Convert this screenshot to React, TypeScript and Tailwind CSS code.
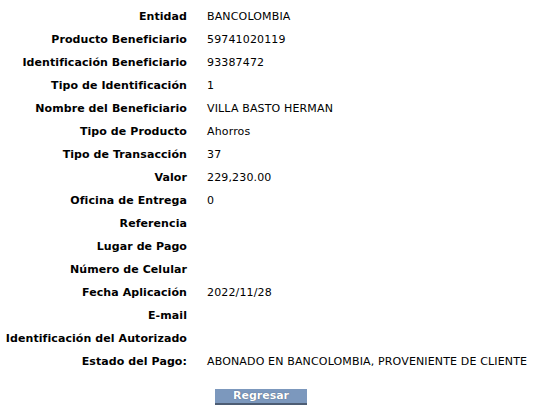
import React from 'react'

const rows: [string, string][] = [
  ['Entidad', 'BANCOLOMBIA'],
  ['Producto Beneficiario', '59741020119'],
  ['Identificación Beneficiario', '93387472'],
  ['Tipo de Identificación', '1'],
  ['Nombre del Beneficiario', 'VILLA BASTO HERMAN'],
  ['Tipo de Producto', 'Ahorros'],
  ['Tipo de Transacción', '37'],
  ['Valor', '229,230.00'],
  ['Oficina de Entrega', '0'],
  ['Referencia', ''],
  ['Lugar de Pago', ''],
  ['Número de Celular', ''],
  ['Fecha Aplicación', '2022/11/28'],
  ['E-mail', ''],
  ['Identificación del Autorizado', ''],
  ['Estado del Pago:', 'ABONADO EN BANCOLOMBIA, PROVENIENTE DE CLIENTE'],
]

const App: React.FC = () => {
  return (
    <div className="w-[533px] h-[413px] bg-white text-black font-['DejaVu_Sans',sans-serif] text-[11px]">
      <div className="pt-[6px] grid grid-cols-[187px_auto] gap-x-[20px]">
        {rows.map(([label, value]) => (
          <React.Fragment key={label}>
            <div className="h-[23px] flex items-center justify-end font-bold whitespace-nowrap tracking-[0.08px]">{label}</div>
            <div className="h-[23px] flex items-center whitespace-nowrap tracking-[0.15px]">{value}</div>
          </React.Fragment>
        ))}
      </div>
      <div className="mt-[14px] pl-[215px]">
        <button className="w-[92px] h-[16px] bg-[#7c98bd] border-b-2 border-[#4d5d74] text-white font-bold text-[11px] leading-none [text-shadow:0_0_1px_#3d4d66]">
          Regresar
        </button>
      </div>
    </div>
  )
}

export default App
